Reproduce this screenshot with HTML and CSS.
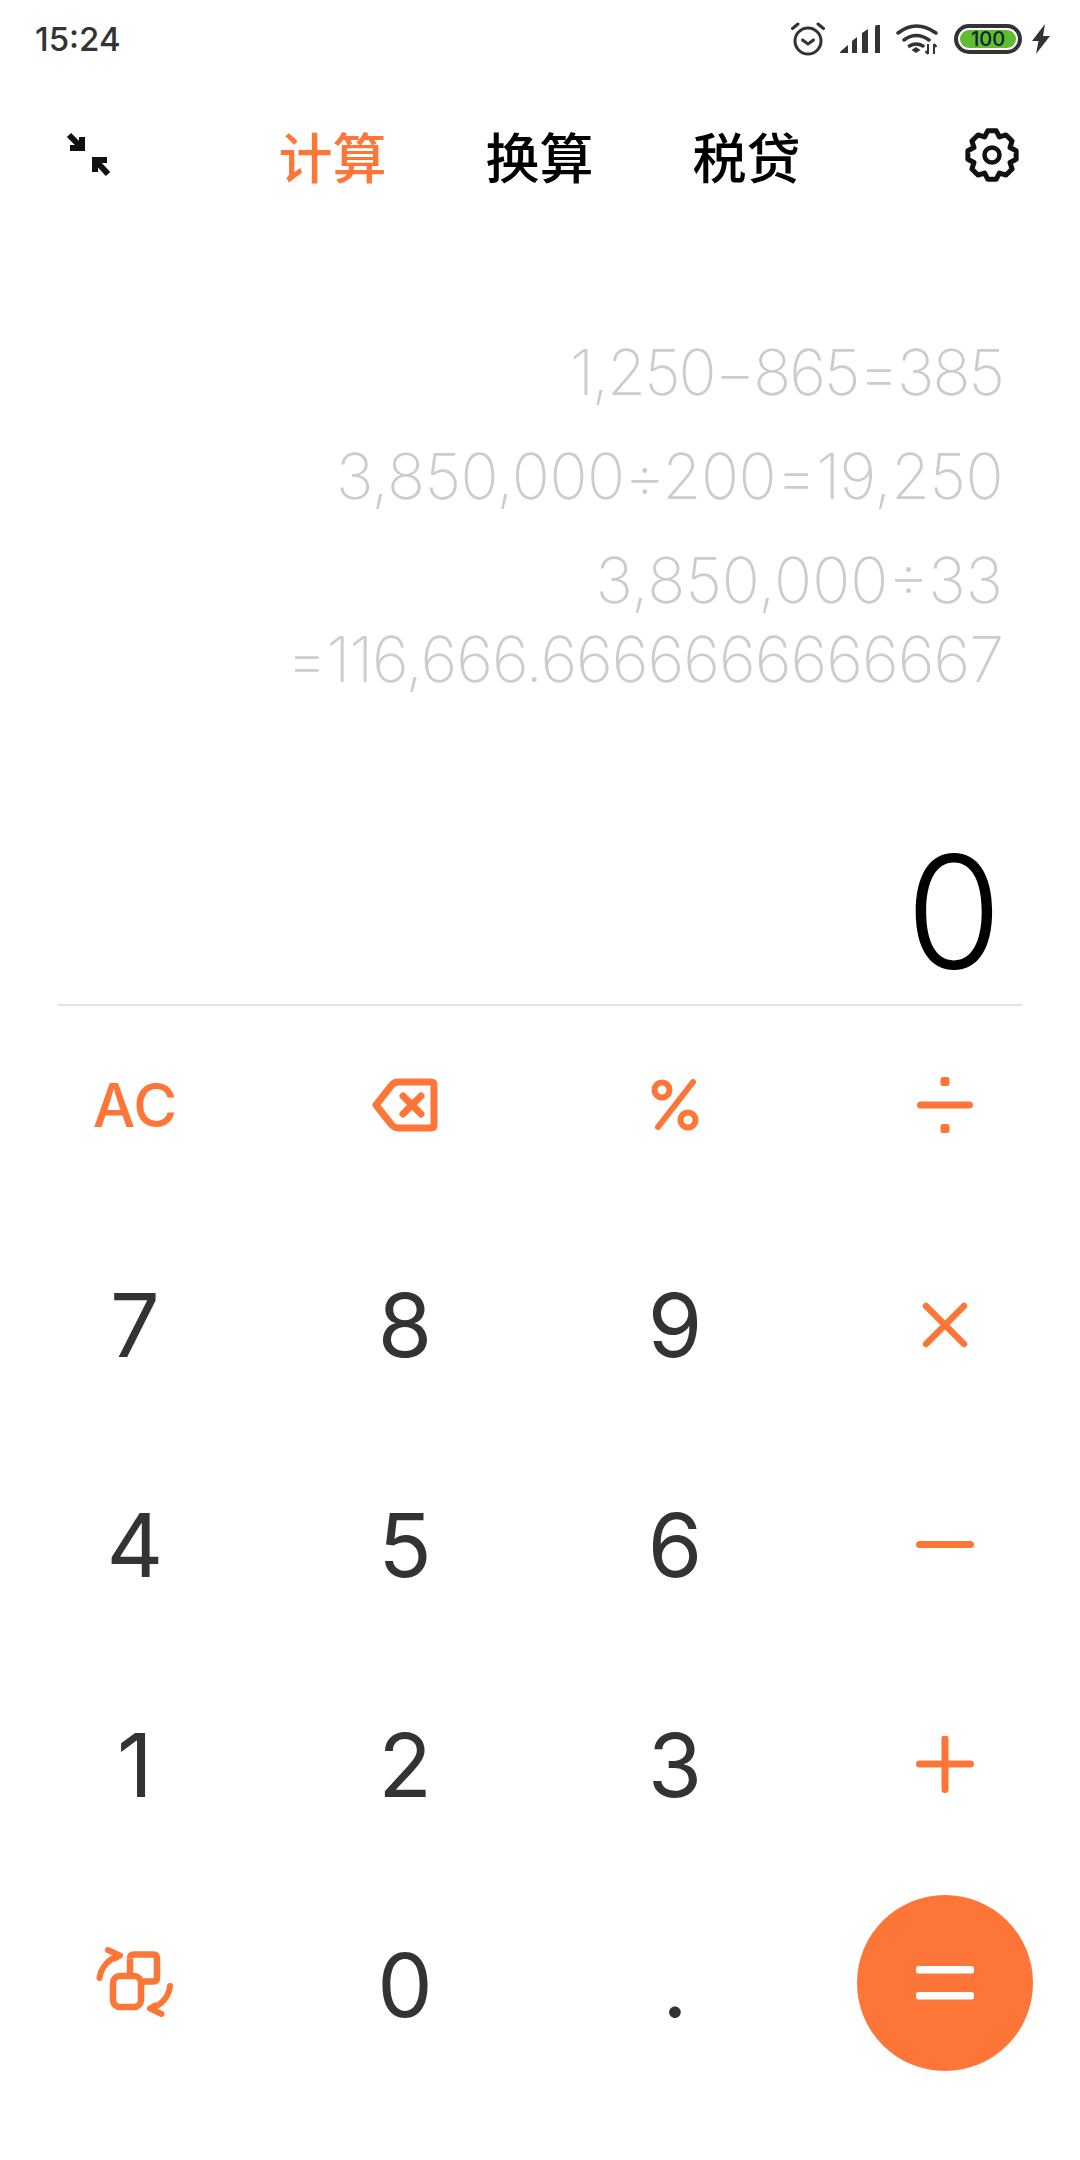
FILE: index.html
```html
<!DOCTYPE html>
<html lang="zh">
<head>
<meta charset="utf-8">
<title>计算器</title>
<link rel="stylesheet" href="styles.css">
</head>
<body>
<div class="phone">
  <div class="status">
    <span class="time">15:24</span>
    <div class="status-icons">
      <svg class="ic-alarm" viewBox="0 0 34 34" width="34" height="34"><circle cx="17" cy="19" r="13" fill="none" stroke="#333" stroke-width="3"/><path d="M11.500 18l5.500 4 5.500-4" fill="none" stroke="#333" stroke-width="3" stroke-linecap="round" stroke-linejoin="round"/><path d="M1.500 6.500L7 2M32.500 6.500L27 2" stroke="#333" stroke-width="3" stroke-linecap="round"/></svg>
      <svg class="ic-signal" viewBox="0 0 40 30" width="40" height="30"><path d="M0 29q0-1 1-2l7-6v8zM12 29V17l5-4v16zM22 29V9l6-4v24zM35 29V3q0-2 2-2h3v28z" fill="#333"/></svg>
      <svg class="ic-wifi" viewBox="0 0 44 34" width="44" height="34"><path d="M2 11Q20-3 40 11M8 18Q20 9 33 18M13.500 24Q20 20 27 24" fill="none" stroke="#333" stroke-width="3.500" stroke-linecap="round"/><path d="M15.500 28l4.500-3 4.500 3-4.500 3z" fill="#333"/><path d="M32 22v10M29.500 29l2.500 3M38 22v10M38 22l2.500 3" stroke="#333" stroke-width="2" fill="none"/></svg>
      <div class="battery"><span class="battery-fill">100</span></div>
      <svg class="ic-bolt" viewBox="0 0 18 30" width="18" height="30"><path d="M13 0L0 17h6.500L4 30 18 12h-7z" fill="#333"/></svg>
    </div>
  </div>
  <header class="topbar">
    <svg class="ic-shrink" viewBox="0 0 44 46" width="44" height="46"><path d="M3 3L15 15M16 5v11H4" fill="none" stroke="#111" stroke-width="6"/><path d="M42 42L30 29M29 40V28h12" fill="none" stroke="#111" stroke-width="6"/></svg>
    <nav class="tabs">
      <span class="tab active">计算</span>
      <span class="tab">换算</span>
      <span class="tab">税贷</span>
    </nav>
    <svg class="ic-gear" viewBox="0 0 56 56" width="56" height="56"><path d="M23.750 3.870H32.250L35.460 9.980 42.050 7.930 48.070 13.950 46.020 20.540 52.130 23.750V32.250L46.020 35.460 48.070 42.050 42.050 48.070 35.460 46.020 32.250 52.130H23.750L20.540 46.020 13.950 48.070 7.930 42.050 9.980 35.460 3.870 32.250V23.750L9.980 20.540 7.930 13.950 13.950 7.930 20.540 9.980z" fill="none" stroke="#111" stroke-width="5" stroke-linejoin="round"/><circle cx="28" cy="28" r="7.500" fill="none" stroke="#111" stroke-width="4.500"/></svg>
  </header>
  <section class="history">
    <p class="entry tight-a">1,250−865=385</p>
    <p class="entry tight-b">3,850,000÷200=19,250</p>
    <p class="entry">3,850,000÷33<br><span class="tight-c">=116,666.6666666666667</span></p>
  </section>
  <div class="result">0</div>
  <main class="keypad">
    <button class="key op-text">AC</button>
    <button class="key"><svg viewBox="0 0 66 54" width="66" height="54"><path d="M4 27L19 8q3-4 7-4h33q3 0 3 3v40q0 3-3 3H26q-4 0-7-4z" fill="none" stroke="#fd7537" stroke-width="7" stroke-linejoin="round"/><path d="M31 18l18 18M49 18L31 36" stroke="#fd7537" stroke-width="7" stroke-linecap="round"/></svg></button>
    <button class="key"><svg viewBox="0 0 48 52" width="48" height="52"><circle cx="11" cy="11" r="7.500" fill="none" stroke="#fd7537" stroke-width="6"/><circle cx="37" cy="41" r="7.500" fill="none" stroke="#fd7537" stroke-width="6"/><path d="M42 3L7 48" stroke="#fd7537" stroke-width="6" stroke-linecap="round"/></svg></button>
    <button class="key"><svg viewBox="0 0 58 56" width="58" height="56"><rect x="1" y="24.500" width="56" height="7" rx="3.500" fill="#fd7537"/><rect x="24.500" y="0" width="9" height="9" rx="2.500" fill="#fd7537"/><rect x="24.500" y="47" width="9" height="9" rx="2.500" fill="#fd7537"/></svg></button>

    <button class="key digit">7</button>
    <button class="key digit">8</button>
    <button class="key digit">9</button>
    <button class="key"><svg viewBox="0 0 46 46" width="46" height="46"><path d="M4 4l38 38M42 4L4 42" stroke="#fd7537" stroke-width="6.500" stroke-linecap="round"/></svg></button>

    <button class="key digit">4</button>
    <button class="key digit">5</button>
    <button class="key digit">6</button>
    <button class="key"><svg viewBox="0 0 58 8" width="58" height="8"><rect x="0" y="0" width="58" height="7" rx="3.500" fill="#fd7537"/></svg></button>

    <button class="key digit">1</button>
    <button class="key digit">2</button>
    <button class="key digit">3</button>
    <button class="key"><svg viewBox="0 0 58 58" width="58" height="58"><path d="M3.500 28h51M29 2.500v51" stroke="#fd7537" stroke-width="7" stroke-linecap="round"/></svg></button>

    <button class="key"><svg viewBox="0 0 80 80" width="80" height="80"><path d="M35 13.500q0-4 4-4h19q4 0 4 4v19q0 4-4 4h-10" fill="none" stroke="#fd7537" stroke-width="6.500"/><path d="M35 13.500v17" stroke="#fd7537" stroke-width="6.500"/><rect x="18" y="31" width="28" height="31" rx="7" fill="none" stroke="#fd7537" stroke-width="6.500"/><path d="M4.500 33C6 23 13 14 24 11M13 5l12 5.500-5 3M75 41C74 51 67 60 57 63M66.500 69L55 63.500l5-3" fill="none" stroke="#fd7537" stroke-width="6" stroke-linecap="round" stroke-linejoin="round"/></svg></button>
    <button class="key digit">0</button>
    <button class="key digit">.</button>
    <button class="key"><span class="equals"><svg viewBox="0 0 58 34" width="58" height="34"><rect y="0" width="58" height="7.500" rx="2.500" fill="#fff"/><rect y="26" width="58" height="7.500" rx="2.500" fill="#fff"/></svg></span></button>
  </main>
</div>
</body>
</html>
```

FILE: styles.css
```css
* { box-sizing: border-box; }
html, body { margin: 0; padding: 0; background: #fff; }
.phone {
  width: 1080px;
  height: 2160px;
  overflow: hidden;
  font-family: Inter, "Noto Sans CJK SC", sans-serif;
}
.status {
  height: 78px;
  padding: 0 30px 0 35px;
  display: flex;
  align-items: center;
  justify-content: space-between;
}
.time { font-size: 33px; font-weight: 500; color: #333; }
.status-icons { display: flex; align-items: center; }
.ic-alarm { margin-right: 15px; }
.ic-signal { margin-right: 16px; }
.ic-wifi { margin-right: 14px; }
.ic-bolt { margin-left: 10px; }
.battery {
  width: 68px;
  height: 30px;
  border: 4px solid #333;
  border-radius: 15px;
  padding: 2px;
  display: flex;
}
.battery-fill {
  flex: 1;
  background: #60bd32;
  border-radius: 10px;
  font-size: 20px;
  line-height: 18px;
  font-weight: 500;
  color: #123;
  text-align: center;
}
.topbar {
  height: 158px;
  padding: 0 60px 4px 66px;
  display: flex;
  align-items: center;
  justify-content: space-between;
}
.tabs { display: flex; gap: 99px; margin-left: 5px; }
.tab {
  font-family: "Noto Sans CJK SC", sans-serif;
  font-size: 54px;
  font-weight: 500;
  color: #000;
}
.tab.active { color: #fd7537; }
.history {
  padding: 97px 77px 0 0;
  height: 586px;
  text-align: right;
  color: #ccc;
  font-size: 63px;
  font-weight: 200;
  line-height: 79px;
}
.entry { margin: 0 0 25px; }
.tight-a { letter-spacing: -2px; }
.tight-b { letter-spacing: -0.5px; }
.tight-c { letter-spacing: -1px; }
.result {
  height: 184px;
  border-bottom: 2px solid #e4e4e4;
  margin: 0 58px;
  padding-right: 20px;
  text-align: right;
  font-size: 156px;
  font-weight: 300;
  line-height: 180px;
  color: #000;
}
.keypad {
  margin-top: -11px;
  display: grid;
  grid-template-columns: repeat(4, 270px);
  grid-template-rows: repeat(5, 220px);
}
.key {
  border: 0;
  padding: 0;
  background: none;
  display: flex;
  align-items: center;
  justify-content: center;
  font-family: inherit;
}
.digit { font-size: 88px; font-weight: 400; color: #333; }
.op-text { font-size: 60px; font-weight: 500; color: #fd7537; }
.equals {
  width: 176px;
  height: 176px;
  margin-bottom: 4px;
  border-radius: 50%;
  background: #fd7537;
  display: flex;
  align-items: center;
  justify-content: center;
}
```
